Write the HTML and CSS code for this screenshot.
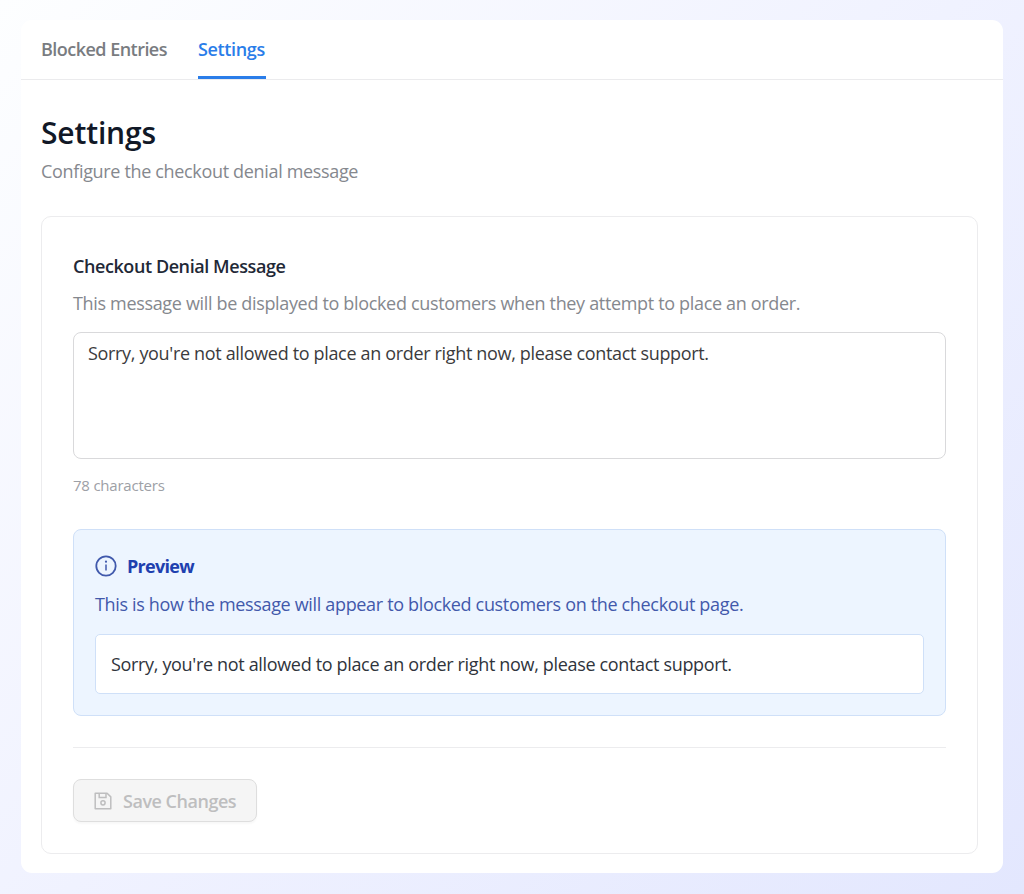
FILE: index.html
```
<!DOCTYPE html>
<html lang="en">
<head>
  <meta charset="UTF-8" />
  <meta name="viewport" content="width=device-width, initial-scale=1.0" />
  <title>Settings</title>
  <link rel="stylesheet" href="styles.css">
</head>
<body>
  <main class="panel">
    <!-- Tabs -->
    <nav class="tabs">
      <a class="tab tab-entries">Blocked Entries</a>
      <a class="tab tab-settings active">Settings</a>
    </nav>

    <div class="content">
      <h1>Settings</h1>
      <p class="subtitle">Configure the checkout denial message</p>

      <!-- Message form -->
      <form class="card">
        <label class="field-label" for="message">Checkout Denial Message</label>
        <p class="field-help">This message will be displayed to blocked customers when they attempt to place an order.</p>
        <textarea id="message" class="message" spellcheck="false">Sorry, you're not allowed to place an order right now, please contact support.</textarea>
        <p class="count">78 characters</p>

        <!-- Preview -->
        <section class="preview">
          <div class="preview-head">
            <svg class="icon-info" viewBox="0 0 22 22" fill="none" stroke="currentColor">
              <circle cx="11" cy="11" r="9.7" stroke-width="1.8" />
              <path d="M11 9.4v6.2" stroke-width="1.5" />
              <circle cx="11" cy="6.7" r="1.1" fill="currentColor" stroke="none" />
            </svg>
            <h2>Preview</h2>
          </div>
          <p class="preview-text">This is how the message will appear to blocked customers on the checkout page.</p>
          <div class="preview-box"><span>Sorry, you're not allowed to place an order right now, please contact support.</span></div>
        </section>

        <div class="footer">
          <button type="button" class="save" disabled>
            <svg class="icon-save" viewBox="0 0 18 18" fill="none" stroke="currentColor" stroke-width="1.5">
              <path d="M1.2 1.2h11.9l3.7 3.7v11.9H1.2z" stroke-linejoin="round" />
              <path d="M5.2 1.2v4.4h6.8V1.2" />
              <circle cx="9" cy="10.8" r="2.1" />
            </svg>
            <span>Save Changes</span>
          </button>
        </div>
      </form>
    </div>
  </main>
</body>
</html>
```
FILE: styles.css
```
* {
  box-sizing: border-box;
}

body {
  margin: 0;
  min-height: 894px;
  padding: 20px 21px 21px;
  font-family: "Segoe UI", "Open Sans", "Noto Sans", sans-serif;
  font-size: 18px;
  line-height: 28px;
  letter-spacing: -0.335px;
  color: #374151;
  background: linear-gradient(135deg, #fdfeff 0%, #f0f2ff 50%, #e3e7fe 100%);
}

h1, h2, p {
  margin: 0;
}

.panel {
  height: 853px;
  background: #fff;
  border-radius: 11px;
}

/* Tabs */
.tabs {
  display: flex;
  gap: 31px;
  height: 60px;
  padding: 0 20px;
  border-bottom: 1px solid #ebebed;
}

.tab {
  height: 59px;
  padding-top: 15px;
  font-weight: 600;
  color: #797c81;
  border-bottom: 3px solid transparent;
  white-space: nowrap;
}

.tab-entries {
  width: 126px;
  letter-spacing: -0.53px;
}

.tab-settings {
  width: 68px;
  letter-spacing: -0.35px;
}

.tab.active {
  color: #2a7de9;
  border-bottom-color: #2a7de9;
}

.content {
  padding: 33px 25px 0 20px;
}

h1 {
  font-size: 30px;
  font-weight: 600;
  line-height: 40px;
  letter-spacing: -0.15px;
  color: #111827;
}

.subtitle {
  margin-top: 4px;
  color: #85888e;
}

/* Card */
.card {
  height: 638px;
  margin-top: 31px;
  padding: 35px 31px 0;
  border: 1px solid #ececee;
  border-radius: 10px;
}

.field-label {
  display: block;
  font-weight: 600;
  letter-spacing: -0.42px;
  color: #1f2937;
}

.field-help {
  margin-top: 9px;
  color: #85888e;
  white-space: nowrap;
}

.message {
  display: block;
  width: 100%;
  height: 127px;
  margin-top: 15px;
  padding: 6px 14px;
  font: inherit;
  letter-spacing: inherit;
  color: #3b3b3d;
  background: #fff;
  border: 1px solid #d9d9db;
  border-radius: 8px;
  outline: none;
  resize: none;
}

.count {
  margin-top: 12px;
  font-size: 15px;
  letter-spacing: -0.22px;
  color: #9da0a6;
}

/* Preview */
.preview {
  height: 187px;
  margin-top: 30px;
  padding: 22px 21px 0;
  background: #edf5ff;
  border: 1px solid #cfe0f8;
  border-radius: 8px;
}

.preview-head {
  display: flex;
  align-items: center;
  gap: 10px;
  color: #1e40af;
}

.icon-info {
  width: 22px;
  height: 22px;
  color: #4059ac;
}

h2 {
  font-size: 18px;
  font-weight: 700;
  line-height: 28px;
  letter-spacing: -0.7px;
}

.preview-text {
  margin-top: 10px;
  color: #4259ab;
  white-space: nowrap;
}

.preview-box {
  height: 60px;
  margin-top: 16px;
  padding: 15px;
  color: #2f343c;
  background: #fff;
  border: 1px solid #cfe0f8;
  border-radius: 5px;
}

/* Save button */
.footer {
  margin-top: 31px;
  padding-top: 31px;
  border-top: 1px solid #ececee;
}

.save {
  display: flex;
  align-items: center;
  gap: 11px;
  width: 184px;
  height: 43px;
  padding: 0 0 0 20px;
  font: inherit;
  font-weight: 600;
  letter-spacing: -0.48px;
  color: #bebebf;
  background: #f5f5f5;
  border: 1px solid #dedede;
  border-radius: 8px;
  box-shadow: 0 2px 2px rgba(0, 0, 0, 0.03);
  white-space: nowrap;
}

.icon-save {
  width: 18px;
  height: 18px;
}
```
